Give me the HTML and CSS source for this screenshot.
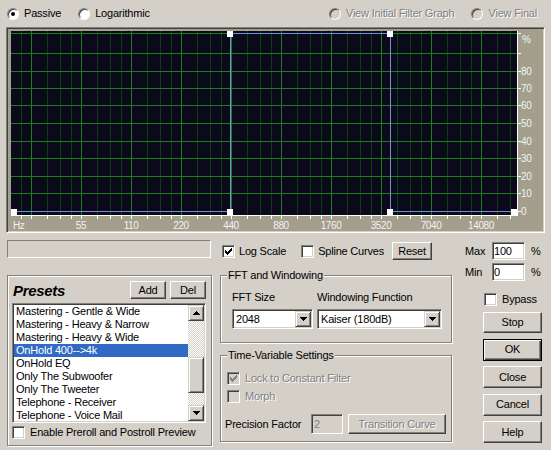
FILE: index.html
```html
<!DOCTYPE html>
<html lang="en">
<head>
  <meta charset="UTF-8">
  <title>FFT Filter</title>
  <link rel="stylesheet" href="styles.css">
</head>
<body>
<div class="dialog">

  <div class="top">
    <label class="opt"><span class="radio on"></span>Passive</label>
    <label class="opt"><span class="radio"></span>Logarithmic</label>
    <div class="top-right">
      <label class="opt off"><span class="radio"></span>View Initial Filter Graph</label>
      <label class="opt off"><span class="radio"></span>View Final</label>
    </div>
  </div>

  <!-- graph -->
  <div class="graph">
    <svg class="plot" width="535" height="202" viewBox="8 29 535 202">
      <defs>
        <pattern id="vgrid" x="31" y="0" width="50" height="300" patternUnits="userSpaceOnUse">
          <rect x="0" width="1" height="300" fill="#1d7e1d"/>
          <rect x="16" width="1" height="300" fill="#0f3d12"/>
          <rect x="29" width="1" height="300" fill="#0f3d12"/>
          <rect x="40" width="1" height="300" fill="#0f3d12"/>
        </pattern>
        <pattern id="ticks" x="31" y="216" width="50" height="3" patternUnits="userSpaceOnUse">
          <rect x="0" width="1" height="3" fill="#fff"/>
          <rect x="16" width="1" height="3" fill="#fff"/>
          <rect x="29" width="1" height="3" fill="#fff"/>
          <rect x="40" width="1" height="3" fill="#fff"/>
        </pattern>
      </defs>
      <rect x="11" y="31" width="506" height="184" fill="#0a0a1a"/>
      <rect x="11" y="31" width="506" height="184" fill="url(#vgrid)"/>
      <g fill="#1d7e1d">
        <rect x="11" y="33" width="506" height="1"/>
        <rect x="11" y="53" width="506" height="1"/>
        <rect x="11" y="71" width="506" height="1"/>
        <rect x="11" y="88" width="506" height="1"/>
        <rect x="11" y="105" width="506" height="1"/>
        <rect x="11" y="123" width="506" height="1"/>
        <rect x="11" y="141" width="506" height="1"/>
        <rect x="11" y="158" width="506" height="1"/>
        <rect x="11" y="176" width="506" height="1"/>
        <rect x="11" y="193" width="506" height="1"/>
      </g>
      <path d="M11 211.5H230.5V33.5H390.5V211.5H517" stroke="#6f90d4" fill="none"/>
      <rect x="11" y="215" width="507" height="1" fill="#fff"/>
      <rect x="517" y="31" width="1" height="185" fill="#fff"/>
      <rect x="11" y="216" width="507" height="3" fill="url(#ticks)"/>
      <g fill="#fff">
        <rect x="518" y="33" width="3" height="1"/>
        <rect x="518" y="53" width="3" height="1"/>
        <rect x="518" y="71" width="3" height="1"/>
        <rect x="518" y="88" width="3" height="1"/>
        <rect x="518" y="105" width="3" height="1"/>
        <rect x="518" y="123" width="3" height="1"/>
        <rect x="518" y="141" width="3" height="1"/>
        <rect x="518" y="158" width="3" height="1"/>
        <rect x="518" y="176" width="3" height="1"/>
        <rect x="518" y="193" width="3" height="1"/>
        <rect x="518" y="211" width="3" height="1"/>
        <rect x="11" y="209" width="6" height="6"/>
        <rect x="227" y="31" width="6" height="6"/>
        <rect x="227" y="209" width="6" height="6"/>
        <rect x="387" y="31" width="6" height="6"/>
        <rect x="387" y="209" width="6" height="6"/>
        <rect x="511" y="209" width="6" height="6"/>
      </g>
      <g class="axis-text">
        <text x="522" y="43">%</text>
        <text x="521" y="75">80</text>
        <text x="521" y="92">70</text>
        <text x="521" y="109">60</text>
        <text x="521" y="127">50</text>
        <text x="521" y="145">40</text>
        <text x="521" y="162">30</text>
        <text x="521" y="180">20</text>
        <text x="521" y="197">10</text>
        <text x="521" y="215">0</text>
        <text x="13" y="229">Hz</text>
      </g>
      <g class="axis-text" text-anchor="middle">
        <text x="81" y="229">55</text>
        <text x="131" y="229">110</text>
        <text x="181" y="229">220</text>
        <text x="231" y="229">440</text>
        <text x="281" y="229">880</text>
        <text x="331" y="229">1760</text>
        <text x="381" y="229">3520</text>
        <text x="431" y="229">7040</text>
        <text x="481" y="229">14080</text>
      </g>
    </svg>
  </div>

  <div class="bottom">

    <div class="col-left">
      <div class="status"></div>
      <div class="presets etched">
        <div class="presets-head">
          <span class="presets-title">Presets</span>
          <button class="btn add">Add</button>
          <button class="btn del">Del</button>
        </div>
        <div class="list">
          <ul class="items">
            <li>Mastering - Gentle &amp; Wide</li>
            <li>Mastering - Heavy &amp; Narrow</li>
            <li>Mastering - Heavy &amp; Wide</li>
            <li class="sel">OnHold 400--&gt;4k</li>
            <li>OnHold EQ</li>
            <li>Only The Subwoofer</li>
            <li>Only The Tweeter</li>
            <li>Telephone - Receiver</li>
            <li>Telephone - Voice Mail</li>
          </ul>
          <div class="scroll">
            <div class="sb-btn">
              <svg width="7" height="4" viewBox="0 0 7 4"><path d="M3 0H4V1H5V2H6V3H7V4H0V3H1V2H2V1H3Z"/></svg>
            </div>
            <div class="sb-btn thumb"></div>
            <div class="sb-btn down">
              <svg width="7" height="4" viewBox="0 0 7 4"><path d="M0 0H7V1H6V2H5V3H4V4H3V3H2V2H1V1H0Z"/></svg>
            </div>
          </div>
        </div>
        <label class="opt preview"><span class="check"></span>Enable Preroll and Postroll Preview</label>
      </div>
    </div>

    <div class="col-mid">
      <div class="opts-row">
        <label class="opt log">
          <span class="check"><svg width="7" height="7" viewBox="0 0 7 7"><path d="M0 2H1V3H2V4H3V3H4V2H5V1H6V0H7V3H6V4H5V5H4V6H3V7H2V6H1V5H0Z"/></svg></span>Log Scale
        </label>
        <label class="opt spline"><span class="check"></span>Spline Curves</label>
        <button class="btn reset">Reset</button>
      </div>

      <div class="group etched fft">
        <div class="group-title">FFT and Windowing</div>
        <div class="fft-grid">
          <span>FFT Size</span>
          <span>Windowing Function</span>
          <div class="combo">
            <span class="combo-text">2048</span>
            <span class="drop"><svg width="7" height="4" viewBox="0 0 7 4"><path d="M0 0H7V1H6V2H5V3H4V4H3V3H2V2H1V1H0Z"/></svg></span>
          </div>
          <div class="combo">
            <span class="combo-text">Kaiser (180dB)</span>
            <span class="drop"><svg width="7" height="4" viewBox="0 0 7 4"><path d="M0 0H7V1H6V2H5V3H4V4H3V3H2V2H1V1H0Z"/></svg></span>
          </div>
        </div>
      </div>

      <div class="group etched timevar">
        <div class="group-title">Time-Variable Settings</div>
        <label class="opt off lock">
          <span class="check"><svg width="7" height="7" viewBox="0 0 7 7"><path d="M0 2H1V3H2V4H3V3H4V2H5V1H6V0H7V3H6V4H5V5H4V6H3V7H2V6H1V5H0Z"/></svg></span>Lock to Constant Filter
        </label>
        <label class="opt off morph"><span class="check"></span>Morph</label>
        <div class="precision">
          <span class="precision-label">Precision Factor</span>
          <span class="field disabled">2</span>
          <button class="btn off transition">Transition Curve</button>
        </div>
      </div>
    </div>

    <div class="col-right">
      <div class="range max">
        <span class="range-label">Max</span>
        <span class="field">100</span>
        <span class="pct">%</span>
      </div>
      <div class="range min">
        <span class="range-label">Min</span>
        <span class="field">0</span>
        <span class="pct">%</span>
      </div>
      <label class="opt bypass"><span class="check"></span>Bypass</label>
      <div class="actions">
        <button class="btn stop">Stop</button>
        <button class="btn default">OK</button>
        <button class="btn">Close</button>
        <button class="btn">Cancel</button>
        <button class="btn">Help</button>
      </div>
    </div>

  </div>
</div>
</body>
</html>
```

FILE: styles.css
```css
body {
  margin: 0;
  background: #d4d0c8;
  font-family: "Liberation Sans", Arial, sans-serif;
  font-size: 11px;
  line-height: 13px;
  letter-spacing: -0.2px;
  color: #000;
}

.dialog {
  width: 551px;
  height: 450px;
  overflow: hidden;
}

/* radio / check */
.opt {
  display: flex;
  align-items: center;
  gap: 5px;
  white-space: nowrap;
}

.opt.off {
  color: #808080;
  text-shadow: 1px 1px #fff;
}

.radio {
  width: 12px;
  height: 12px;
  box-sizing: border-box;
  border-radius: 50%;
  background: #fff;
  border: 1px solid;
  border-color: #808080 #fff #fff #808080;
  box-shadow: inset 1px 1px #404040;
  display: flex;
  align-items: center;
  justify-content: center;
}

.radio.on::after {
  content: '';
  width: 4px;
  height: 4px;
  border-radius: 50%;
  background: #000;
}

.opt.off .radio {
  background: #d4d0c8;
}

.check {
  width: 13px;
  height: 13px;
  flex-shrink: 0;
  box-sizing: border-box;
  background: #fff;
  border: 1px solid;
  border-color: #808080 #fff #fff #808080;
  box-shadow: inset 1px 1px #404040, inset -1px -1px #d4d0c8;
  display: flex;
  align-items: center;
  justify-content: center;
  color: #000;
}

.check svg {
  fill: currentColor;
}

.opt.off .check {
  background: #d4d0c8;
  color: #808080;
}

/* buttons */
.btn {
  font: inherit;
  letter-spacing: inherit;
  color: #000;
  background: #d4d0c8;
  border: 1px solid;
  border-color: #fff #404040 #404040 #fff;
  box-shadow: inset -1px -1px #808080;
  padding: 0;
  box-sizing: border-box;
}

.btn.default {
  border-color: #000;
  box-shadow: inset 1px 1px #fff, inset -1px -1px #404040, inset -2px -2px #808080;
}

.btn.off {
  color: #808080;
  text-shadow: 1px 1px #fff;
}

.field {
  box-sizing: border-box;
  background: #fff;
  border: 1px solid;
  border-color: #808080 #fff #fff #808080;
  box-shadow: inset 1px 1px #404040, inset -1px -1px #d4d0c8;
  padding-left: 2px;
  line-height: 16px;
}

.field.disabled {
  background: #d4d0c8;
  color: #808080;
}

.etched {
  box-sizing: border-box;
  border: 1px solid #808080;
  box-shadow: inset 1px 1px #fff, 1px 1px #fff;
}

/* top row */
.top {
  display: flex;
  align-items: center;
  height: 27px;
  padding: 0 14px 0 7px;
}

.top .opt + .opt {
  margin-left: 17px;
}

.top-right {
  margin-left: auto;
  display: flex;
}

/* graph */
.graph {
  margin: 0 6px;
  height: 206px;
  box-sizing: border-box;
  padding: 1px;
  background: #a49e8d;
  border: 1px solid;
  border-color: #808080 #fff #fff #808080;
  box-shadow: inset 1px 1px #404040, inset -1px -1px #d4d0c8;
}

.plot {
  display: block;
}

.axis-text {
  fill: #f2f2f2;
  font-size: 10px;
  letter-spacing: -0.4px;
}

/* lower part */
.bottom {
  display: flex;
  padding-left: 7px;
}

.col-left {
  width: 205px;
}

.status {
  margin-top: 7px;
  width: 204px;
  height: 18px;
  box-sizing: border-box;
  border: 1px solid;
  border-color: #808080 #fff #fff #808080;
}

.presets {
  margin-top: 17px;
  height: 171px;
  padding: 5px 5px 0 4px;
}

.presets-head {
  display: flex;
  align-items: center;
  height: 18px;
}

.presets-title {
  margin-left: 1px;
  font-size: 15px;
  font-weight: bold;
  font-style: italic;
  letter-spacing: -0.3px;
}

.presets-head .btn {
  width: 36px;
  height: 18px;
}

.add {
  margin-left: auto;
}

.del {
  margin-left: 4px;
}

.list {
  margin-top: 4px;
  display: flex;
  width: 194px;
  height: 120px;
  box-sizing: border-box;
  padding: 1px;
  background: #fff;
  border: 1px solid;
  border-color: #808080 #fff #fff #808080;
  box-shadow: inset 1px 1px #404040, inset -1px -1px #d4d0c8;
  overflow: hidden;
}

.items {
  list-style: none;
  margin: 0;
  padding: 0;
  flex: 1;
  overflow: hidden;
}

.items li {
  height: 13px;
  padding-left: 2px;
  white-space: nowrap;
}

.items li.sel {
  background: #316ac5;
  color: #fff;
}

.scroll {
  width: 16px;
  display: flex;
  flex-direction: column;
  background: conic-gradient(#fff 25%, #d4d0c8 0 50%, #fff 0 75%, #d4d0c8 0);
  background-size: 2px 2px;
}

.sb-btn {
  height: 16px;
  box-sizing: border-box;
  background: #d4d0c8;
  border: 1px solid;
  border-color: #d4d0c8 #404040 #404040 #d4d0c8;
  box-shadow: inset 1px 1px #fff, inset -1px -1px #808080;
  display: flex;
  align-items: center;
  justify-content: center;
}

.thumb {
  margin-top: 36px;
  height: 36px;
}

.sb-btn.down {
  margin-top: auto;
}

.preview {
  margin-top: 3px;
}

/* middle column */
.col-mid {
  margin-left: 8px;
  width: 232px;
}

.opts-row {
  margin-top: 9px;
  height: 18px;
  display: flex;
  align-items: center;
  padding-left: 2px;
}

.log,
.spline {
  gap: 4px;
}

.spline {
  margin-left: 15px;
}

.reset {
  margin-left: 8px;
  width: 40px;
  height: 18px;
}

.group {
  padding-left: 6px;
}

.group-title {
  width: fit-content;
  margin-top: -7px;
  padding: 0 1px;
  background: #d4d0c8;
}

.fft {
  margin-top: 15px;
  height: 68px;
}

.fft-grid {
  display: grid;
  grid-template-columns: 81px 125px;
  column-gap: 4px;
  row-gap: 5px;
  margin: 9px 0 0 5px;
}

.combo {
  display: flex;
  height: 20px;
  box-sizing: border-box;
  padding: 1px;
  background: #fff;
  border: 1px solid;
  border-color: #808080 #fff #fff #808080;
  box-shadow: inset 1px 1px #404040, inset -1px -1px #d4d0c8;
}

.combo-text {
  flex: 1;
  padding-left: 2px;
  line-height: 16px;
}

.drop {
  width: 16px;
  box-sizing: border-box;
  background: #d4d0c8;
  border: 1px solid;
  border-color: #d4d0c8 #404040 #404040 #d4d0c8;
  box-shadow: inset 1px 1px #fff, inset -1px -1px #808080;
  display: flex;
  align-items: center;
  justify-content: center;
}

.timevar {
  margin-top: 12px;
  height: 87px;
}

.lock {
  margin-top: 10px;
}

.morph {
  margin-top: 5px;
}

.precision {
  margin: 11px 0 0 -2px;
  display: flex;
  align-items: center;
  height: 20px;
}

.precision-label {
  width: 86px;
}

.precision .field {
  width: 32px;
  height: 20px;
  line-height: 18px;
}

.transition {
  margin-left: 5px;
  width: 98px;
  height: 20px;
}

/* right column */
.col-right {
  margin-left: 13px;
  width: 80px;
}

.range {
  display: flex;
  align-items: center;
  height: 18px;
}

.range.max {
  margin-top: 9px;
}

.range.min {
  margin-top: 3px;
}

.range-label {
  width: 27px;
}

.range .field {
  width: 33px;
  height: 18px;
  padding-left: 1px;
}

.pct {
  margin-left: 6px;
}

.bypass {
  margin-top: 12px;
  padding-left: 19px;
}

.actions {
  margin: 6px 0 0 18px;
  display: flex;
  flex-direction: column;
  gap: 5.5px;
}

.actions .btn {
  width: 59px;
  height: 22px;
}

.actions .stop {
  height: 21px;
}
```
